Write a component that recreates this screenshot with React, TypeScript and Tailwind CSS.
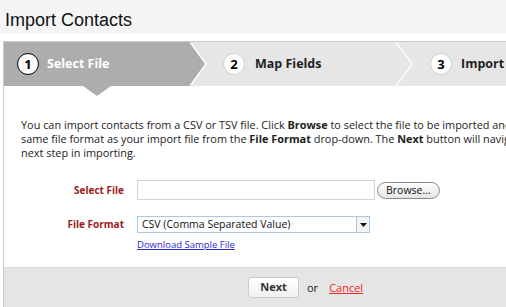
import React from "react";

function Chevron({ fill, outline }: { fill: string; outline: string }) {
  return (
    <svg className="absolute top-0 right-[-16px] z-10" width="18" height="44" viewBox="0 0 18 44">
      <polygon points="0,0 16,22 0,44" fill={fill} />
      <polyline points="0,0 16,22 0,44" fill="none" stroke={outline} strokeWidth="1.5" />
    </svg>
  );
}

function Circle({ n, active }: { n: string; active?: boolean }) {
  return (
    <div
      className={
        "w-[22px] h-[22px] rounded-full bg-white flex items-center justify-center text-[13px] font-bold text-black leading-none " +
        (active ? "border-[1.5px] border-black" : "border border-[#cfcfcf]")
      }
    >
      {n}
    </div>
  );
}

export default function App() {
  const body = { fontFamily: '"Open Sans", "Noto Sans", sans-serif' };
  return (
    <div className="w-[506px] h-[307px] overflow-hidden bg-white relative" style={body}>
      <div className="h-[34px] bg-[#f5f5f5] pl-[5px] pt-[10px]">
        <div className="text-[18px] leading-[20px] text-[#111]" style={{ fontFamily: '"Liberation Sans", Arial, sans-serif' }}>
          Import Contacts
        </div>
      </div>
      <div className="h-[7px]" />
      <div className="ml-[3px] w-[700px] border-l border-t border-[#cccccc] h-[300px] flex flex-col">
        {/* step bar */}
        <div className="flex h-[44px] relative">
          <div className="relative w-[188px] bg-[#adadad] flex items-center pl-[13px] gap-[8px]">
            <Circle n="1" active />
            <span className="text-[12.5px] font-bold text-white">Select File</span>
            <Chevron fill="#adadad" outline="#ffffff" />
            <svg className="absolute left-[79px] top-[44px] z-10" width="28" height="10" viewBox="0 0 28 10">
              <polygon points="0,0 28,0 14,10" fill="#adadad" />
            </svg>
          </div>
          <div className="relative w-[206px] bg-[#e6e6e6] flex items-center pl-[31px] gap-[10px]">
            <Circle n="2" />
            <span className="text-[12.5px] font-bold text-[#222]">Map Fields</span>
            <Chevron fill="#e6e6e6" outline="#ffffff" />
          </div>
          <div className="relative flex-1 bg-[#e6e6e6] flex items-center pl-[32px] gap-[9px]">
            <Circle n="3" />
            <span className="text-[12.5px] font-bold text-[#222]">Import Contacts</span>
          </div>
        </div>
        {/* body */}
        <div className="pt-[32px] h-[181px]">
          <p className="pl-[17px] text-[10.9px] leading-[14px] text-[#222] whitespace-nowrap">
            You can import contacts from a CSV or TSV file. Click <b>Browse</b> to select the file to be imported and select the
            <br />
            same file format as your import file from the <b>File Format</b> drop-down. The <b>Next</b> button will navigate you to the
            <br />
            next step in importing.
          </p>
          <div className="mt-[20px] grid grid-cols-[120px_auto] gap-x-[13px] items-center">
            <div className="text-right text-[10px] font-bold text-[#9a1b1b]">Select File</div>
            <div className="flex items-center gap-[2px]">
              <div className="w-[238px] h-[20px] border border-[#d4d4d4] bg-white" />
              <div className="h-[17px] px-[8px] rounded-full border border-[#8a8a8a] bg-gradient-to-b from-white to-[#e4e4e4] text-[10.5px] leading-[15px] text-[#111]">
                Browse...
              </div>
            </div>
            <div className="mt-[16px] text-right text-[10px] font-bold text-[#9a1b1b]">File Format</div>
            <div className="mt-[16px] w-[233px] h-[17px] border border-[#a9c9e6] bg-white flex items-center">
              <span className="flex-1 pl-[4px] text-[10.5px] leading-[15px] text-[#111]">CSV (Comma Separated Value)</span>
              <div className="w-[13px] h-[15px] border-l border-[#bbb] bg-[#f4f4f4] flex items-center justify-center">
                <svg width="7" height="4" viewBox="0 0 7 4"><polygon points="0,0 7,0 3.5,4" fill="#111" /></svg>
              </div>
            </div>
            <div />
            <a className="mt-[5px] text-[9.5px] leading-[13px] text-[#2a2ad0] underline">Download Sample File</a>
          </div>
        </div>
        {/* footer */}
        <div className="flex-1 bg-[#e5e5e5] border-t border-[#dcdcdc] pt-[9px] pl-[244px] flex items-start gap-[8px]">
          <div className="w-[51px] h-[21px] rounded-[3px] border border-[#cccccc] bg-gradient-to-b from-white to-[#f0f0f0] flex items-center justify-center text-[11px] font-bold text-[#333]">
            Next
          </div>
          <span className="text-[11px] leading-[21px] text-[#222]">or</span>
          <a className="text-[11px] leading-[21px] text-[#f0281e] underline ml-[3px]">Cancel</a>
        </div>
      </div>
    </div>
  );
}
